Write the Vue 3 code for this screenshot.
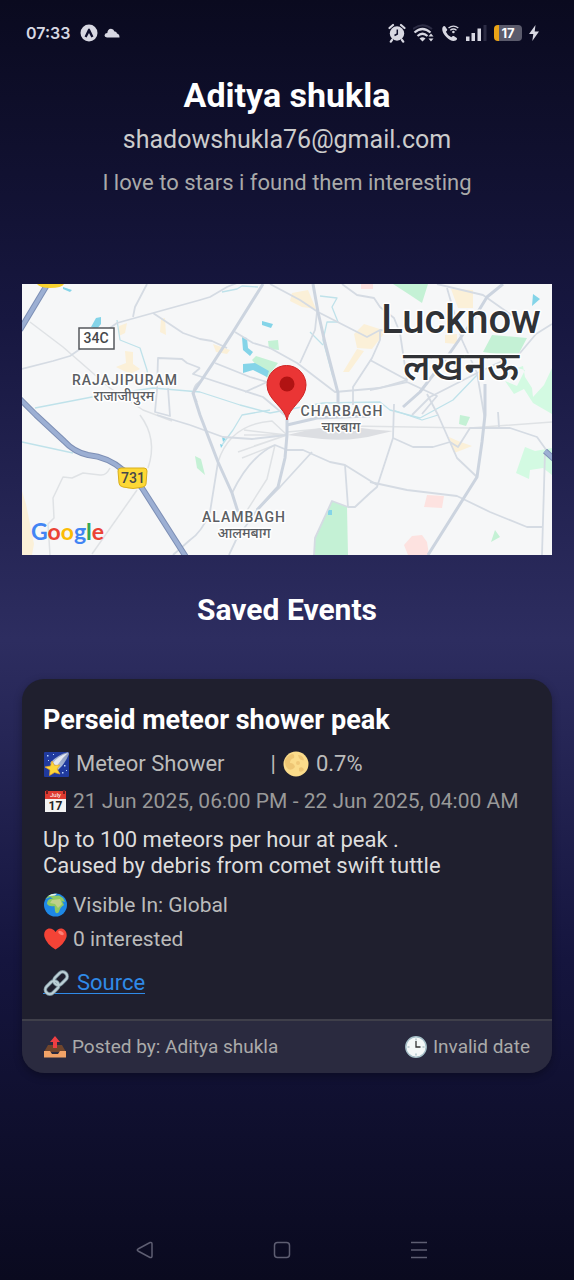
<script setup>
const user = {
  name: 'Aditya shukla',
  email: 'shadowshukla76@gmail.com',
  bio: 'I love to stars i found them interesting',
}

const minorRoads = [
  'M0 85L31 77L48 72L61 63L95 39L131 29L178 16L188 13L205 3L215-1',
  'M125 0L113 23L111 33',
  'M131 29L161 49L178 55L190 57L205 64',
  'M178 84L165 79L160 75L136 74L135 106L133 128L148 132L146 104',
  'M178 84L171 90L183 94L241 113L265 133',
  'M180 96Q166 104 175 118',
  'M248 0L278 16L296 28L345 53L358 46L378 49L385 96L348 76',
  'M295 28L293 46L278 79',
  'M213 48L231 59L248 64L275 79L313 108L358 104L385 96',
  'M193 79L228 93L245 98L223 108',
  'M320 0L335 11L352 14L358 23L372 34L378 49',
  'M358 46L358 56L350 74L331 103L331 121',
  'M415 0L461 11L478 23L498 37',
  'M425 4L440 56L455 89L463 136',
  'M348 106L385 98L415 112L400 130',
  'M530 40L514 50L498 69L461 86L408 113L390 131',
  'M372 120L371 154L355 203L348 209L333 223L326 223',
  'M371 154L391 163L411 163L428 158L436 163L448 144L488 144L515 153L530 174',
  'M405 110L416 131L435 174L455 193',
  'M348 198L385 206L435 212L468 228L505 243L520 243',
  'M523 168L520 271',
  'M476 128L477 143',
  'M253 161L265 166L281 166L308 178L323 181L355 201',
  'M290 168L258 203L235 226L214 256L207 271',
  'M323 181L326 223L310 217L293 254L292 271',
  'M253 161Q228 172 210 209',
  'M196 178L188 228Q180 248 168 256L151 271',
  'M168 141L201 153L230 155L265 151',
  'M135 131L168 141',
]

const thinRoads = [
  'M88 184Q84 192 78 191L61 189L50 194L41 193L31 214L32 234L26 240L28 271',
  'M118 131Q136 155 126 184',
  'M115 206L70 270',
  'M8 38L41 63L88 104L121 126L150 137',
  'M265 151L232 162M265 151L216 168M265 151L222 151M265 151L222 146M220 174L253 161L245 195L224 228',
  'M196 178Q208 140 250 137L265 151',
  'M265 148L330 142L448 144L530 138',
]

const mainRoads = [
  'M241 0L211 48L191 79L171 109L178 131L196 178L210 209L216 228',
  'M291 0L296 28L303 59L316 109L316 125',
  'M481 0L465 13L451 36L425 73L398 108L381 123',
  'M463 100L463 131L460 158L455 193L406 271',
  'M265 135L265 151L263 174L256 203L235 226',
  'M265 141L295 134L348 132',
]

const waterways = [
  'M13 124L70 113L131 104L178 108L218 121L248 129L301 119L358 118L368 126L398 134L431 116L455 91',
  'M95 36L98 56L118 64L125 86L127 100',
  'M298 12L315 14L310 23L316 38L305 38L301 56L311 93',
  'M288 48L301 61',
  'M0 158L51 169',
  'M248 126L220 131L211 146L200 161',
  'M200 8L215 5L220 2L236 3',
  'M371 126L400 136L416 131',
]
</script>

<template>
  <div class="screen">
    <header class="status">
      <div class="status-side">
        <span class="clock">07:33</span>
        <svg width="18" height="18" viewBox="0 0 18 18" aria-hidden="true">
          <circle cx="9" cy="9" r="8.5" fill="#d8d8e2" />
          <path d="M4.600 12.600L7.900 5.400Q9 3.800 10.100 5.400L13.400 12.600L11.400 13.400L9 9L6.600 13.400Z" fill="#10102c" />
        </svg>
        <svg width="16" height="10" viewBox="0 0 16 10" aria-hidden="true">
          <path d="M3 9.500Q.4 9.300.5 7.200Q1 5 3.300 5Q3.600 1 7 .8Q9.600.8 10.500 3.600Q12.500 3.300 13 5.600Q15.500 6 15.500 9.500Z" fill="#d8d8e2" />
        </svg>
      </div>
      <div class="status-side icons">
        <svg width="18" height="20" viewBox="0 0 18 20" aria-hidden="true">
          <circle cx="9" cy="10.500" r="7.200" fill="#d8d8e2" />
          <path d="M1.500 5L5 2M16.500 5L13 2M4 17L2.800 18.600M14 17L15.200 18.600" stroke="#d8d8e2" stroke-width="2.200" stroke-linecap="round" />
          <path d="M9.300 6.500V11L6.500 12.500" stroke="#10102c" stroke-width="1.500" fill="none" />
        </svg>
        <svg width="21" height="18" viewBox="0 0 21 18" aria-hidden="true">
          <path d="M0 5Q9.500 -2.500 19 5" fill="none" stroke="#2c2c44" stroke-width="2" />
          <path d="M1.500 8.500Q9.500 1.500 17.500 8.500M4.500 12Q9.500 7.500 14.500 12" fill="none" stroke="#d8d8e2" stroke-width="2.200" />
          <path d="M6.500 14.500Q9.500 12 12.500 14.500L9.500 17.500Z" fill="#d8d8e2" />
          <path d="M18 9.500L20.500 12.500H15.500ZM18 17.500L20.500 14.500H15.500Z" fill="#d8d8e2" />
        </svg>
        <svg width="18" height="18" viewBox="0 0 18 18" aria-hidden="true">
          <path d="M1.500 3.500Q3 1.300 4.200 2.500L6.200 5.400Q6.400 6.500 4.900 7.700Q6.300 11.300 10.300 13.200Q11.700 11.500 12.800 12L15.800 14Q16.600 15.300 14.700 16.600Q10.500 18.300 5.300 13.100Q.2 8 1.500 3.500Z" fill="#d8d8e2" />
          <path d="M7.500 4Q12.500 .2 17.300 4M9.300 6.200Q12.500 3.700 15.500 6.200" fill="none" stroke="#d8d8e2" stroke-width="1.400" />
          <circle cx="12.400" cy="8" r="1.300" fill="#d8d8e2" />
        </svg>
        <svg width="21" height="16" viewBox="0 0 21 16" aria-hidden="true">
          <path d="M0 11.500h3.500v4.500h-3.500zM5.500 8h3.500v8h-3.500zM11.500 3.500h3.500v12.500h-3.500z" fill="#d8d8e2" />
          <path d="M17.500 0h3v16h-3z" fill="#2c2c44" />
        </svg>
        <span class="battery"><span class="level">17</span></span>
        <svg width="10" height="16" viewBox="0 0 10 16" aria-hidden="true">
          <path d="M6.500 0L0 9H4.300L3.300 16L10 6.500H5.700Z" fill="#d8d8e2" />
        </svg>
      </div>
    </header>

    <main class="content">
      <section class="profile">
        <h1>{{ user.name }}</h1>
        <p class="email">{{ user.email }}</p>
        <p class="bio">{{ user.bio }}</p>
      </section>

      <svg class="map" viewBox="0 0 530 271" role="img" aria-label="Map of Lucknow">
        <rect width="530" height="271" fill="#f6f7f8" />
        <g fill="#fbf0d8">
          <path d="M97 42L105 39L103 49L97 52ZM139 35L143 34L144 51L138 48ZM103 67L111 68L111 80L118 85L108 90L94 83L104 79Z" />
          <path d="M270 9L286 6L294 25L280 23L268 17ZM332 50L342 40L364 47L350 65L335 64ZM335 65L342 67L327 88L321 88ZM429 5L451 6L451 24L436 24ZM423 51L435 50L435 60L423 59ZM427 153L436 157L450 162L440 166L432 169ZM0 207L4 220L12 260L10 271H0ZM191 60L208 66L205 70L194 68Z" />
        </g>
        <g fill="#fde2e0">
          <path d="M339 0H351V5H339ZM405 211L422 212L420 224L402 223ZM390 252L400 251L405 258L407 271H386L382 261Z" />
        </g>
        <g fill="#c4f1d5">
          <path d="M371 0H406L400 19L388 11ZM470 51L505 54L495 73L461 68ZM230 76L234 72L256 79L245 94ZM246 57L256 56L257 66L247 65ZM293 254L310 217L325 223L326 271H292ZM173 172L179 175L183 191L175 184ZM438 131L448 133L444 142L437 140ZM473 246L478 253L469 258Z" />
          <path d="M483 97L495 102L503 86L495 84L501 82L503 93L510 104L511 113L522 101L530 84V130L511 119L502 105L492 110ZM503 163L513 167L530 164V191L521 184L508 186L507 195L494 189Z" fill="#d3fae2" />
        </g>
        <g fill="#84d4e8">
          <path d="M69 43L74 34L79 33L79 40L75 45ZM41 3L50 6L48 8L41 5ZM240 37L251 40L249 44L240 41ZM220 53L225 54L226 64L231 68L228 72L221 66ZM221 80L233 79L247 87L245 93L231 86L221 89ZM511 10L518 15L510 22ZM306 226h4v5h-4zM200 153l4 2l-3 3zM198 160l3 1l-2 3z" />
        </g>
        <g fill="none" stroke-linejoin="round">
          <path v-for="d in thinRoads" :key="d" :d="d" stroke="#dfe2e5" stroke-width="1.500" />
          <path v-for="d in waterways" :key="d" :d="d" stroke="#bfe2ea" stroke-width="1.300" />
          <path v-for="d in minorRoads" :key="d" :d="d" stroke="#d5dbe3" stroke-width="1.800" />
          <path v-for="d in mainRoads" :key="d" :d="d" stroke="#ccd4df" stroke-width="3" />
          <path d="M265 151Q300 142 325 142Q350 146 371 147L358 150Q330 158 300 155Z" fill="#dcdee2" />
          <path d="M25 1L-2 46M-2 115L14 131L42 157Q52 168 66 171Q86 173 101 186Q111 191 120 204L164 273M523 167L532 175" stroke="#7d8fb5" stroke-width="6" />
          <path d="M25 1L-2 46M-2 115L14 131L42 157Q52 168 66 171Q86 173 101 186Q111 191 120 204L164 273M523 167L532 175" stroke="#9cafd3" stroke-width="4" />
        </g>
        <path d="M15 0H42Q40 4 28 4Q18 4 15 0Z" fill="#f9d22e" />

        <rect x="57" y="44" width="35" height="21" fill="#fff" stroke="#55585c" stroke-width="1.500" />
        <text x="74" y="59" class="road">34C</text>
        <path d="M99 184H122Q125 184 125 187L124 200Q124 202 121 203Q111 206 101 203Q97 202 97 199L96 187Q96 184 99 184Z" fill="#fdd835" stroke="#d9ae1c" stroke-width="1" />
        <text x="111" y="199" class="road">731</text>

        <g class="area">
          <text x="103" y="101">RAJAJIPURAM</text>
          <text x="102" y="117" class="hindi">राजाजीपुरम</text>
          <text x="320" y="132">CHARBAGH</text>
          <text x="319" y="148" class="hindi">चारबाग</text>
          <text x="222" y="238">ALAMBAGH</text>
          <text x="222" y="254" class="hindi">आलमबाग</text>
        </g>
        <text x="439" y="49" class="city">Lucknow</text>
        <text x="439" y="96" class="city city-hindi">लखनऊ</text>

        <path d="M265 136C263 123 245 116 245 101A19.500 19.500 0 0 1 284 101C284 116 267 123 265 136Z" fill="#ea3535" stroke="#cf2424" stroke-width="1" />
        <circle cx="265" cy="100" r="7.500" fill="#b11313" />
        <text x="9" y="256" class="brand"><tspan fill="#4285f4">G</tspan><tspan fill="#ea4335">o</tspan><tspan fill="#fbbc05">o</tspan><tspan fill="#4285f4">g</tspan><tspan fill="#34a853">l</tspan><tspan fill="#ea4335">e</tspan></text>
      </svg>

      <h2>Saved Events</h2>

      <article class="card">
        <div class="body">
          <h3>Perseid meteor shower peak</h3>
          <div class="row kind">
            <svg class="emoji" viewBox="0 0 26 26" aria-hidden="true">
              <defs>
                <linearGradient id="tail" x1="0" y1="1" x2="1" y2="0"><stop offset="0" stop-color="#b8c9e8" /><stop offset="1" stop-color="#8996b8" /></linearGradient>
              </defs>
              <rect x="1" y="1" width="25" height="25" rx="1" fill="#203a9e" />
              <path d="M7 12Q14 4 25 1L26 3Q22 13 15 19Z" fill="url(#tail)" />
              <path d="M10 12Q15 5 25 2Q18 8 14 15Z" fill="#e4e8f2" />
              <path d="M9 10L11.500 14.500L17 14L14 18L17 23L11.500 21.500L6.500 24.500L7 19L2 16L7.500 15Z" fill="#fdd63b" stroke="#e8a62a" stroke-width=".7" />
              <path d="M4 4h1.500v1.500h-1.500zM10 3h1v1h-1zM5 9h1v1h-1zM21 14h1.500v1.500h-1.500zM19 21h1.500v1.500h-1.500zM23 19h1v1h-1z" fill="#b8d5ff" />
            </svg>
            <span>Meteor Shower</span>
            <span class="bar">|</span>
            <svg class="emoji" viewBox="0 0 26 26" aria-hidden="true">
              <circle cx="13" cy="13" r="12.500" fill="#fbdc8b" />
              <path d="M2 9Q5 4 9 3Q12 3 11 7Q7 8 7 12Q11 12 12 16Q9 20 5 18Q1 14 2 9ZM15 4Q20 4 21 9Q18 10 16 7ZM16 17Q20 15 21 19Q18 22 16 20Z" fill="#e6b865" opacity=".6" />
              <circle cx="15" cy="12" r="2" fill="#f0c878" />
            </svg>
            <span>0.7%</span>
          </div>
          <div class="row small dates">
            <svg class="emoji small-emoji" viewBox="0 0 24 24" aria-hidden="true">
              <path d="M2 2H23V23H2Z" fill="#f3f3f3" />
              <path d="M2 2H23V10H2Z" fill="#df3b31" />
              <path d="M3 1h2v4h-2zM20 1h2v4h-2z" fill="#701e1e" />
              <text x="12.500" y="8" class="month">July</text>
              <text x="12.500" y="21" class="day">17</text>
            </svg>
            <span>21 Jun 2025, 06:00 PM - 22 Jun 2025, 04:00 AM</span>
          </div>
          <p class="about">Up to 100 meteors per hour at peak .<br>Caused by debris from comet swift tuttle</p>
          <div class="row small visible">
            <svg class="emoji small-emoji" viewBox="0 0 24 24" aria-hidden="true">
              <circle cx="12.500" cy="12" r="11.500" fill="#1e88e5" />
              <path d="M2.500 6Q6 1 12 .8L10 3L16 2.500L20 5L22 9L19 8L21 12Q17 14 16 19Q13 22 12 18L11.500 13Q6 14 4 11Q4 7 7 6L10 5.500L7 4Z" fill="#8fca62" />
              <path d="M9 7L17 6L19 11L15 15L12 11L7 10Z" fill="#bfd08a" />
              <path d="M5 3Q9 .3 14 .8L12 2.500Z" fill="#e7f4ed" />
            </svg>
            <span>Visible In: Global</span>
          </div>
          <div class="row small likes">
            <svg class="emoji small-emoji" viewBox="0 0 24 24" aria-hidden="true">
              <path d="M12.500 22.500Q3.500 17 1.500 10Q0 3.500 5.500 1.500Q10 .8 12.500 5Q15 .8 19 1.500Q24.500 3.500 23.500 10Q21.500 17 12.500 22.500Z" fill="#f44336" />
              <ellipse cx="18" cy="6" rx="3" ry="1.700" fill="#ff8177" transform="rotate(28 18 6)" />
            </svg>
            <span>0 interested</span>
          </div>
          <a class="source" href="#source">
            <svg class="emoji" viewBox="0 0 26 26" aria-hidden="true">
              <g fill="none" stroke="#79909b" stroke-width="3.600">
                <rect x="1.500" y="13" width="15" height="9" rx="4.500" transform="rotate(-45 9 17.500)" />
                <rect x="10" y="4" width="15" height="9" rx="4.500" transform="rotate(-45 17.500 8.500)" />
              </g>
              <g fill="none" stroke="#bdd0d7" stroke-width="2">
                <rect x="1.500" y="13" width="15" height="9" rx="4.500" transform="rotate(-45 9 17.500)" />
                <rect x="10" y="4" width="15" height="9" rx="4.500" transform="rotate(-45 17.500 8.500)" />
              </g>
            </svg>
            <span>Source</span>
          </a>
        </div>
        <footer>
          <div class="row meta">
            <svg class="emoji tiny-emoji" viewBox="0 0 22 22" aria-hidden="true">
              <path d="M4 9H18L22 16H0Z" fill="#70452c" />
              <path d="M0 15H6L8 18H14L16 15H22V21.500H0Z" fill="#f2a367" />
              <path d="M11 0L16 6H13V12H9V6H6Z" fill="#ef3e42" />
            </svg>
            <span>Posted by: Aditya shukla</span>
          </div>
          <div class="row meta">
            <svg class="emoji tiny-emoji" viewBox="0 0 22 22" aria-hidden="true">
              <circle cx="11" cy="11" r="10.200" fill="#f4f8f8" stroke="#a6c0c9" stroke-width="1.400" />
              <path d="M11 2.500v2M11 17.500v2M2.500 11h2M17.500 11h2" stroke="#8daab3" />
              <path d="M11 5V11H15.500" fill="none" stroke="#333" stroke-width="1.300" />
            </svg>
            <span>Invalid date</span>
          </div>
        </footer>
      </article>
    </main>

    <nav aria-label="System">
      <button type="button" aria-label="Back">
        <svg width="18" height="18" viewBox="0 0 18 18"><path d="M2 8L14 1.500Q16 1 16 3V15Q16 17 14 16.500L2 10Q.5 9 2 8Z" /></svg>
      </button>
      <button type="button" aria-label="Home">
        <svg width="18" height="18" viewBox="0 0 18 18"><rect x="1.500" y="1.500" width="15" height="15" rx="3" /></svg>
      </button>
      <button type="button" aria-label="Recent apps">
        <svg width="18" height="18" viewBox="0 0 18 18"><path d="M1 1.500H17M1 9H17M1 16.500H17" /></svg>
      </button>
    </nav>
  </div>
</template>

<style>
body {
  margin: 0;
  background: #0a0a1f;
}
</style>

<style scoped>
.screen {
  box-sizing: border-box;
  min-height: 100vh;
  display: flex;
  flex-direction: column;
  font-family: Roboto, "Noto Sans", sans-serif;
  color: #fff;
  background: linear-gradient(#0a0a1f 0%, #171740 25%, #2d2d60 50%, #15153e 75%, #0a0a1f 100%);
}
h1, h2, h3, p {
  margin: 0;
}
svg {
  display: block;
  flex: none;
}
.status {
  height: 66px;
  display: flex;
  align-items: center;
  justify-content: space-between;
  padding: 0 35px 0 26px;
}
.status-side {
  display: flex;
  align-items: center;
  gap: 6px;
}
.clock {
  margin-right: 4px;
  font: 600 16px/20px Inter, sans-serif;
  color: #d8d8e2;
}
.status .icons {
  gap: 7px;
}
.battery {
  width: 28px;
  height: 16px;
  display: flex;
  align-items: center;
  justify-content: center;
  border-radius: 4px;
  background: linear-gradient(90deg, #eaa417 0 5px, #5b5b6c 5px);
}
.level {
  font: 700 13px/16px Inter, sans-serif;
}
.content {
  padding: 0 22px;
}
.profile {
  text-align: center;
}
h1 {
  padding-top: 8px;
  font-size: 34px;
  line-height: 42px;
  font-weight: 700;
}
.email {
  margin-top: 9px;
  font-size: 25px;
  line-height: 30px;
  color: #ccc;
}
.bio {
  margin-top: 14px;
  font-size: 22px;
  line-height: 28px;
  color: #aaa;
}
.map {
  width: 100%;
  height: auto;
  margin-top: 87px;
}
.road {
  font: 500 14px Roboto, sans-serif;
  text-anchor: middle;
  fill: #46484b;
}
.area text, .city {
  text-anchor: middle;
  paint-order: stroke;
  stroke: #fff;
  stroke-width: 3px;
  stroke-linejoin: round;
}
.area text {
  font: 500 14px Roboto, sans-serif;
  letter-spacing: 1px;
  fill: #5b5e63;
}
.area .hindi {
  font: 500 14px "Noto Sans", sans-serif;
  letter-spacing: 0;
}
.city {
  font: 500 40px Roboto, sans-serif;
  fill: #303236;
}
.city-hindi {
  font: 500 40px "Noto Sans", sans-serif;
}
.brand {
  font: 700 23px Lato, sans-serif;
}
h2 {
  margin-top: 37px;
  font-size: 30px;
  line-height: 36px;
  font-weight: 700;
  text-align: center;
}
.card {
  margin-top: 51px;
  border-radius: 22px;
  overflow: hidden;
  background: #1f1f2e;
  box-shadow: 0 3px 8px rgba(0, 0, 0, 0.3);
}
.body {
  padding: 24px 21px 25px;
}
h3 {
  font-size: 27px;
  line-height: 34px;
  font-weight: 700;
}
.row {
  display: flex;
  align-items: center;
  gap: 7px;
}
.emoji {
  width: 26px;
  height: 26px;
}
.small-emoji {
  width: 24px;
  height: 24px;
}
.tiny-emoji {
  width: 22px;
  height: 22px;
}
.kind {
  margin-top: 13px;
  font-size: 22px;
  line-height: 28px;
  color: #bbb;
}
.bar {
  margin-left: 39px;
}
.small {
  gap: 6px;
  font-size: 21px;
  line-height: 26px;
  color: #bbb;
}
.dates {
  margin-top: 10px;
  color: #999;
}
.about {
  margin-top: 13px;
  font-size: 22px;
  line-height: 26px;
  color: #ddd;
}
.visible {
  margin-top: 13px;
}
.likes {
  margin-top: 8px;
}
.source {
  width: max-content;
  height: 21px;
  margin-top: 20px;
  display: flex;
  align-items: center;
  gap: 8px;
  border-bottom: 1px solid #2f8ae8;
  font-size: 22px;
  line-height: 22px;
  color: #2f8ae8;
  text-decoration: none;
}
footer {
  display: flex;
  align-items: center;
  justify-content: space-between;
  padding: 14px 22px;
  border-top: 2px solid #3f3f4a;
  background: #2a2a3f;
}
.meta {
  gap: 6px;
  font-size: 19px;
  line-height: 24px;
  color: #aaa;
}
.month {
  font: 6px Roboto, sans-serif;
  text-anchor: middle;
  fill: #fff;
}
.day {
  font: 700 12px Roboto, sans-serif;
  text-anchor: middle;
  fill: #222;
}
nav {
  margin-top: auto;
  display: grid;
  grid-template-columns: repeat(3, 1fr);
  padding: 0 87px 0 77px;
}
button {
  height: 60px;
  display: flex;
  align-items: center;
  justify-content: center;
  padding: 0;
  border: 0;
  background: none;
}
button svg {
  fill: none;
  stroke: #5e5e72;
  stroke-width: 1.500;
}
</style>
